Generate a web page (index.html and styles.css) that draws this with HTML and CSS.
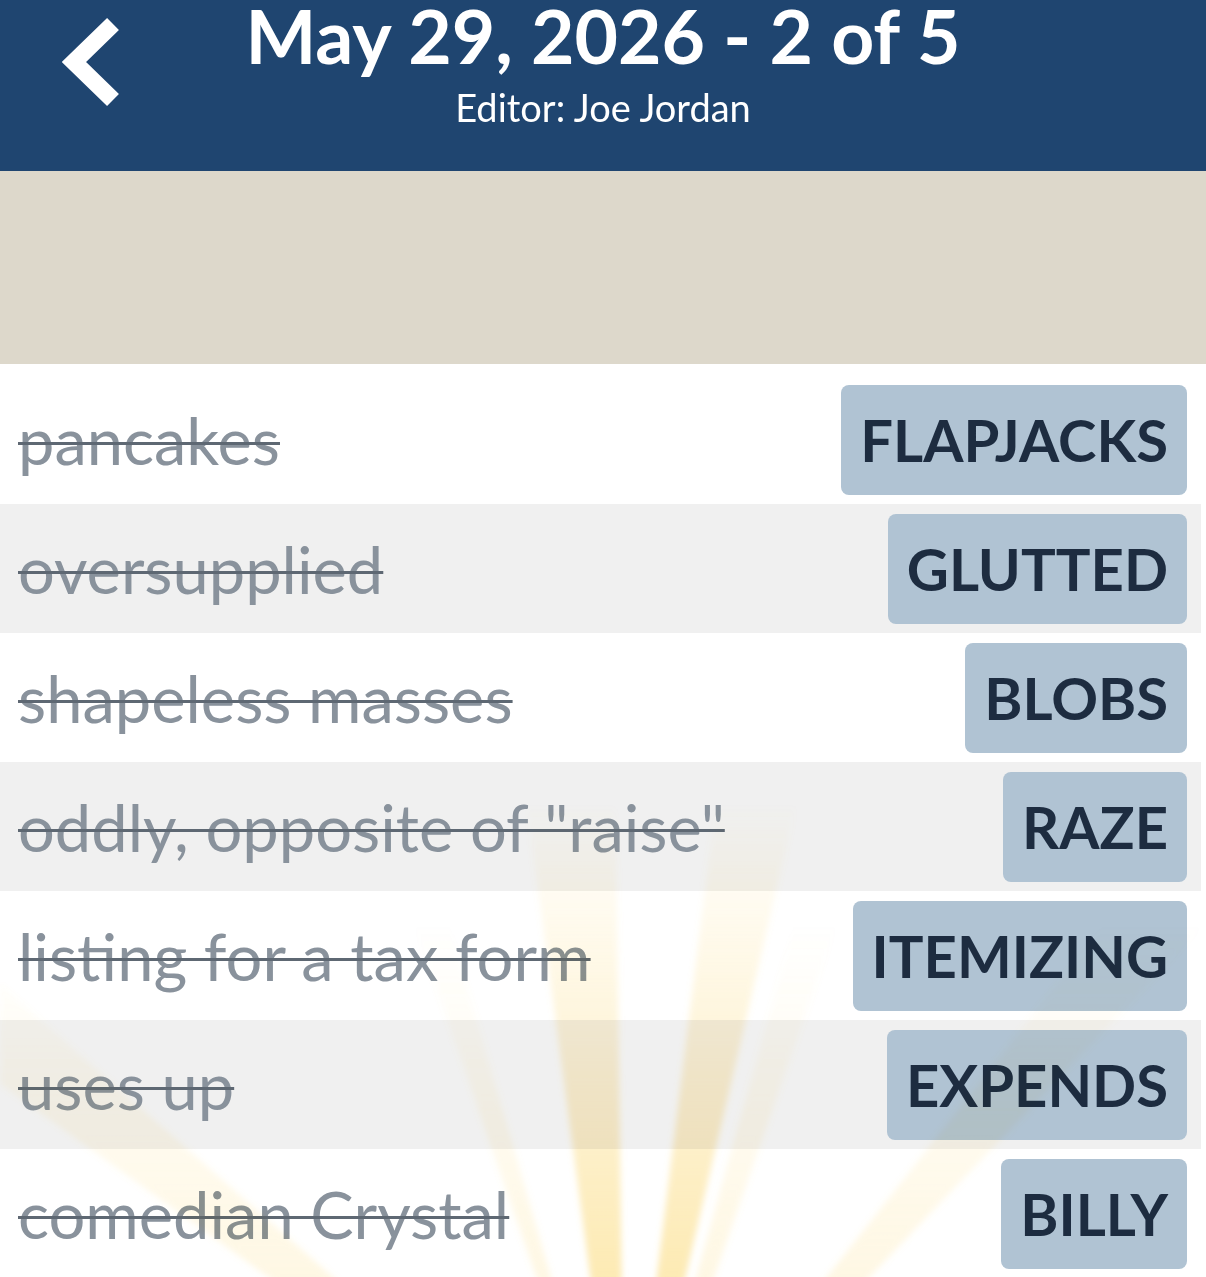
FILE: index.html
```html
<!DOCTYPE html>
<html lang="en">
<head>
    <meta charset="UTF-8">
    <meta name="viewport" content="width=device-width, initial-scale=1.0">
    <title>May 29, 2026 - 2 of 5</title>
    <link rel="stylesheet" href="styles.css">
</head>
<body>
    <header class="topbar">
        <a class="back" href="#" aria-label="Back">
            <svg width="70" height="110" viewBox="0 0 70 110">
                <polyline points="51,24 12,62 51,100" fill="none" stroke="#fff" stroke-width="17" stroke-linejoin="miter"/>
            </svg>
        </a>
        <div class="heading">
            <h1>May 29, 2026 - 2 of 5</h1>
            <p class="editor">Editor: Joe Jordan</p>
        </div>
        <span></span>
    </header>

    <div class="banner"></div>

    <div class="answers">
        <!-- sun rays behind the finished clues -->
        <svg class="rays" viewBox="0 0 1206 913" preserveAspectRatio="none">
            <defs>
                <linearGradient id="fade" gradientUnits="userSpaceOnUse" x1="0" y1="440" x2="0" y2="913">
                    <stop offset="0" stop-color="#fbd977" stop-opacity="0"/>
                    <stop offset="0.3" stop-color="#fbd977" stop-opacity="0.16"/>
                    <stop offset="1" stop-color="#fbd977" stop-opacity="0.55"/>
                </linearGradient>
                <linearGradient id="faint" gradientUnits="userSpaceOnUse" x1="0" y1="560" x2="0" y2="913">
                    <stop offset="0" stop-color="#fbd977" stop-opacity="0"/>
                    <stop offset="1" stop-color="#fbd977" stop-opacity="0.2"/>
                </linearGradient>
                <filter id="soft" x="-10%" y="-10%" width="120%" height="130%">
                    <feGaussianBlur stdDeviation="3"/>
                </filter>
            </defs>
            <g filter="url(#soft)">
                <g fill="url(#fade)">
                    <polygon points="625,1170 467,0 610,0"/>
                    <polygon points="625,1170 770,0 900,0"/>
                </g>
                <g fill="url(#faint)">
                    <polygon points="625,1170 220,0 288,0"/>
                    <polygon points="625,1170 949,0 1032,0"/>
                    <polygon points="625,1170 1206,430 1206,560"/>
                    <polygon points="625,1170 0,620 0,720"/>
                </g>
            </g>
        </svg>

        <div class="row"><span class="clue">pancakes</span><span class="tile">FLAPJACKS</span></div>
        <div class="row"><span class="clue">oversupplied</span><span class="tile">GLUTTED</span></div>
        <div class="row"><span class="clue">shapeless masses</span><span class="tile">BLOBS</span></div>
        <div class="row"><span class="clue">oddly, opposite of "raise"</span><span class="tile">RAZE</span></div>
        <div class="row"><span class="clue">listing for a tax form</span><span class="tile">ITEMIZING</span></div>
        <div class="row"><span class="clue">uses up</span><span class="tile">EXPENDS</span></div>
        <div class="row"><span class="clue">comedian Crystal</span><span class="tile">BILLY</span></div>
    </div>
</body>
</html>
```

FILE: styles.css
```css
        body {
            margin: 0;
            font-family: Lato, "Open Sans", sans-serif;
            background-color: #fff;
            overflow: hidden;
        }
        .topbar {
            display: grid;
            grid-template-columns: 140px 1fr 140px;
            height: 171px;
            background-color: #1f4570;
            color: #fff;
        }
        .back {
            display: block;
            padding: 0 0 0 62px;
        }
        .back svg {
            display: block;
        }
        .heading {
            text-align: center;
            padding-top: 4px;
        }
        h1 {
            margin: 0;
            font-size: 75px;
            font-weight: 700;
            line-height: 62px;
        }
        .editor {
            margin: 19px 0 0;
            font-size: 38px;
            line-height: 1.2;
        }
        .banner {
            height: 193px;
            background-color: #ddd8cb;
        }
        .answers {
            position: relative;
            padding: 11px 5px 0 0;
        }
        .rays {
            position: absolute;
            left: 0;
            top: 0;
            width: 100%;
            height: 913px;
            pointer-events: none;
            mix-blend-mode: multiply;
            z-index: 1;
        }
        .row {
            display: flex;
            align-items: center;
            justify-content: space-between;
            height: 129px;
            padding: 0 14px 0 18px;
        }
        .row:nth-of-type(2n) {
            background-color: #f0f0f0;
        }
        .clue {
            font-size: 65px;
            color: #89929c;
            text-decoration: line-through;
            text-decoration-color: #5e6873;
            text-decoration-thickness: 3px;
        }
        .tile {
            display: flex;
            align-items: center;
            height: 110px;
            padding: 0 19px;
            border-radius: 8px;
            background-color: #b0c3d3;
            color: #1d2c40;
            font-size: 58px;
            font-weight: 700;
        }
```
